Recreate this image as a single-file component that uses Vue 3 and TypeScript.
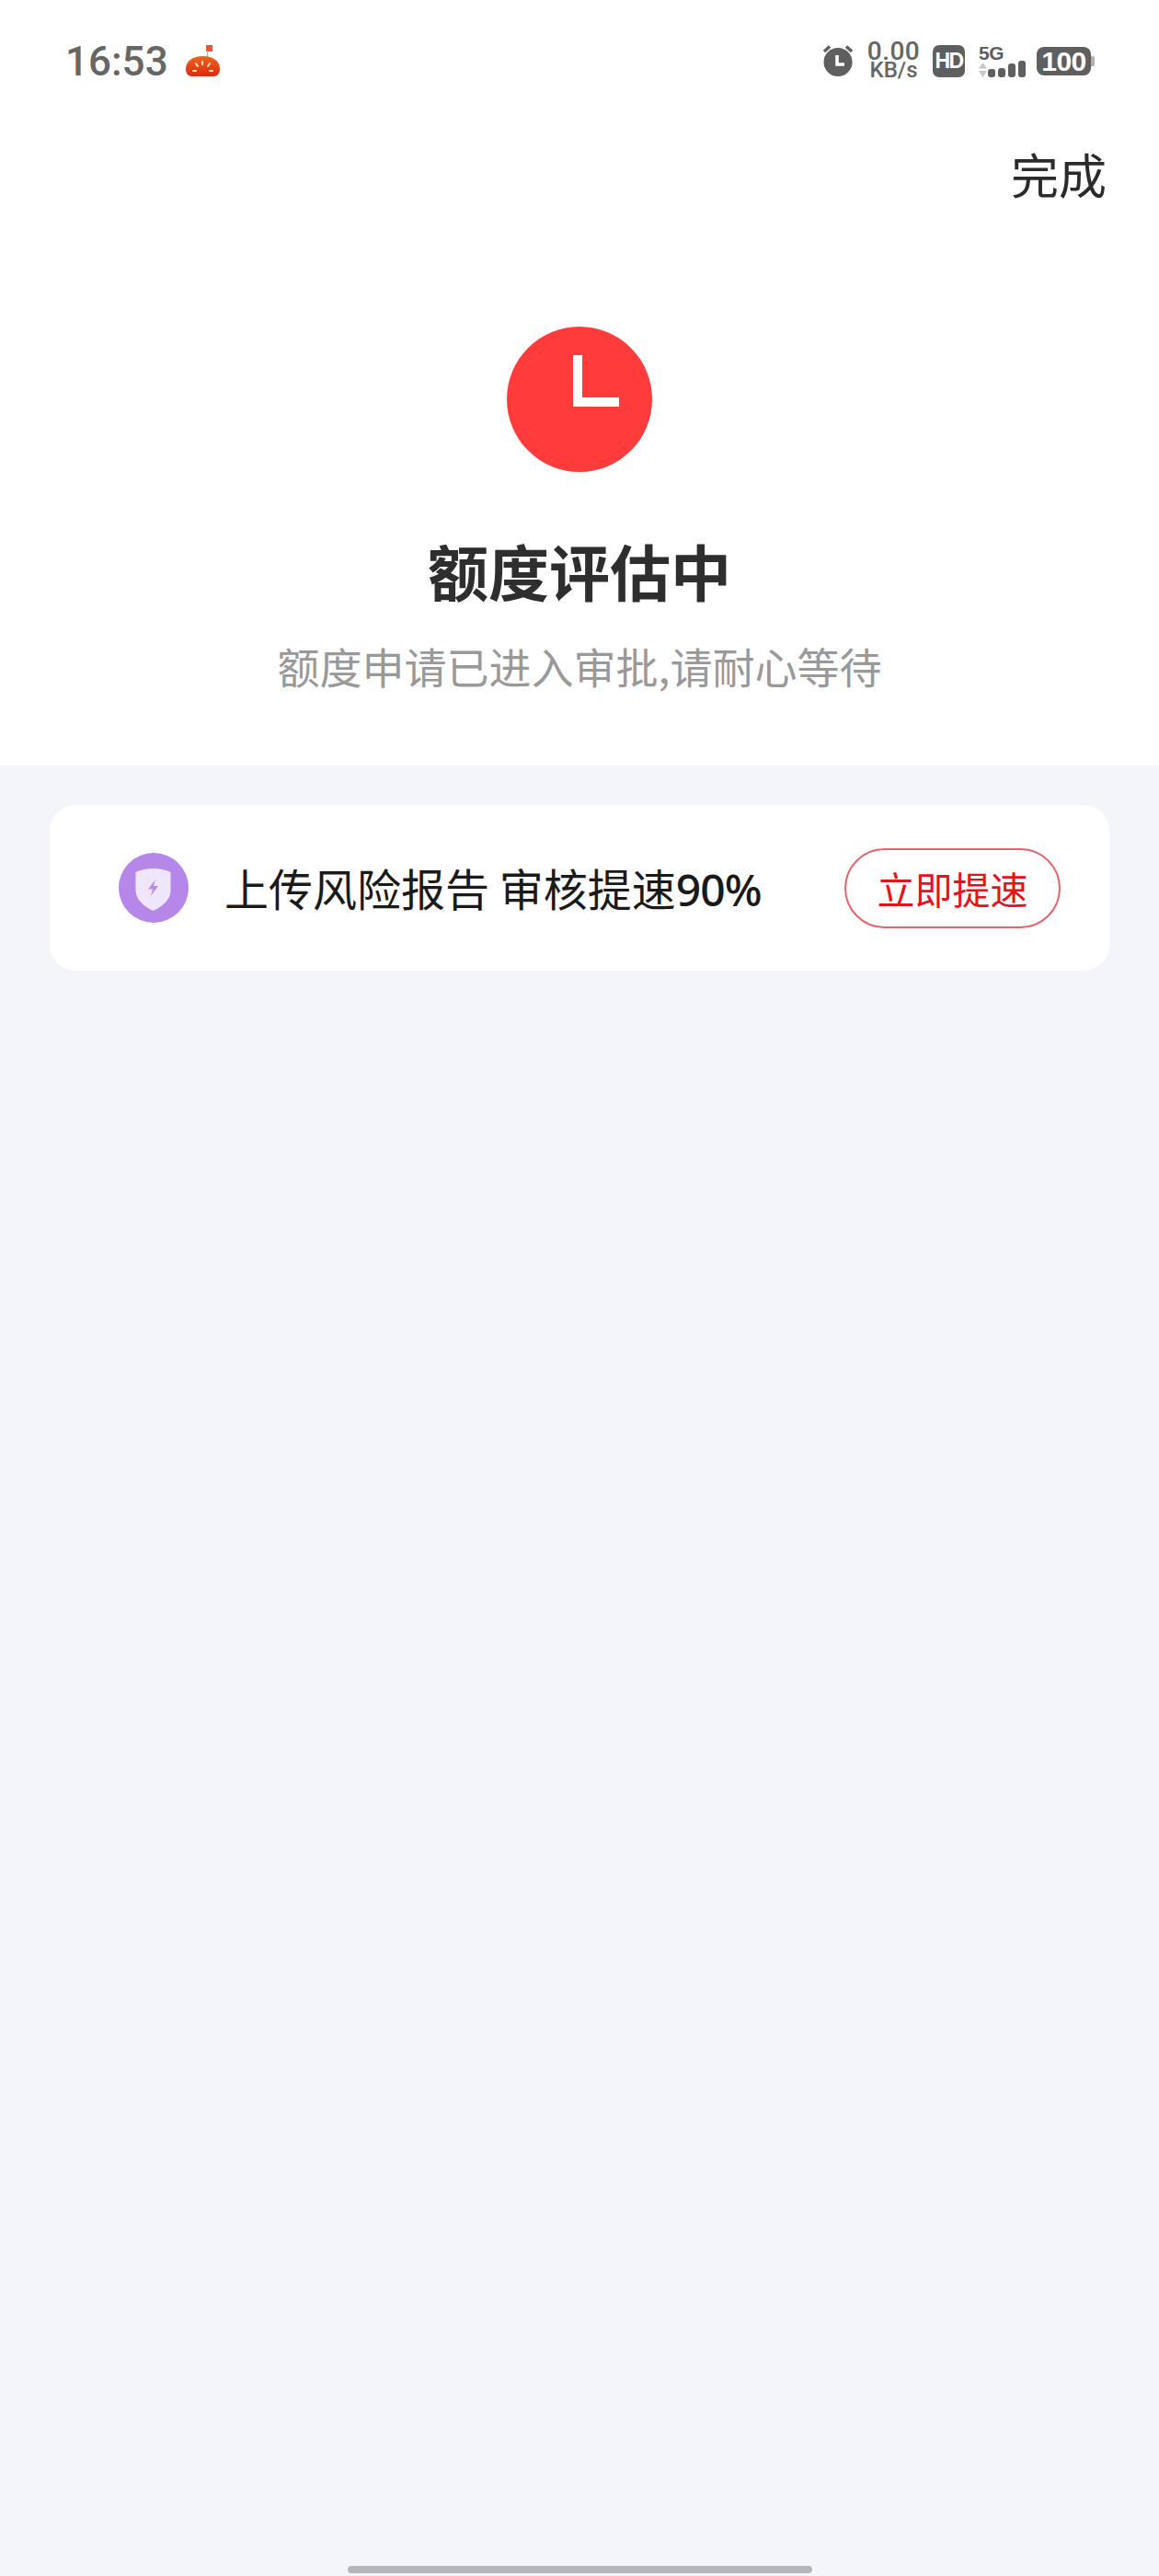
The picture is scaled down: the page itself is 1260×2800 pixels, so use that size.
<script setup lang="ts">
const bars: number[] = [9, 10, 15, 18]
</script>

<template>
  <div class="page">
    <header class="top">
      <div class="status">
        <div class="status-left">
          <span class="time">16:53</span>
          <svg class="tomato" width="37" height="34" viewBox="0 0 37 34">
            <defs>
              <linearGradient id="tom" x1="0" y1="0" x2="0" y2="1">
                <stop offset="0" stop-color="#f0641e" />
                <stop offset="1" stop-color="#dc2a10" />
              </linearGradient>
            </defs>
            <rect x="22" y="0" width="7" height="7" fill="#e8553c" />
            <rect x="23" y="6" width="1.200" height="7" fill="#e9a090" />
            <path d="M0 26C0 17 8 12 18.500 12S37 17 37 26C37 31 34 34 30 34H7C3 34 0 31 0 26z" fill="url(#tom)" />
            <g stroke="#fde3c0" stroke-width="2" stroke-linecap="round">
              <path d="M18 18v3M11 20l2 3M26 20l-2 3M8 28h3M26 28h3" />
            </g>
          </svg>
        </div>
        <div class="status-right">
          <svg class="alarm" width="34" height="34" viewBox="0 0 34 34">
            <circle cx="17" cy="18.500" r="15.500" fill="#5f5f5f" />
            <path d="M2 7l6-5.500M32 7l-6-5.500" stroke="#5f5f5f" stroke-width="3.500" fill="none" />
            <path d="M16 11v10h8" stroke="#fff" stroke-width="3.500" fill="none" />
          </svg>
          <div class="speed">
            <span class="speed-num">0.00</span>
            <span class="speed-unit">KB/s</span>
          </div>
          <span class="hd">HD</span>
          <div class="signal">
            <span class="five-g">5G</span>
            <div class="signal-row">
              <svg width="9" height="16" viewBox="0 0 9 16">
                <path d="M4.500 0L9 6.500H0zM0 9h9l-4.500 7z" fill="#c8c8c8" />
              </svg>
              <div class="bars">
                <i v-for="(h, n) in bars" :key="n" class="bar" :style="{ height: h + 'px' }"></i>
              </div>
            </div>
          </div>
          <div class="battery">
            <span class="battery-body">100</span>
            <i class="battery-tip"></i>
          </div>
        </div>
      </div>

      <div class="nav">
        <span class="done">完成</span>
      </div>

      <div class="hero">
        <div class="clock"><i class="hand"></i></div>
        <h1 class="title">额度评估中</h1>
        <p class="sub">额度申请已进入审批,请耐心等待</p>
      </div>
    </header>

    <section class="card">
      <svg class="shield" width="76" height="76" viewBox="0 0 76 76">
        <circle cx="38" cy="38" r="38" fill="#b587e8" />
        <path d="M37.500 17c7 0 13 1.500 19 4v20c0 9-8 17-19 22-11-5-19-13-19-22V21c6-2.500 12-4 19-4z" fill="#efe6fb" />
        <path d="M40 29L32 39.500H37L35 47L43 36H38z" fill="#b98bea" />
      </svg>
      <span class="card-text">上传风险报告 审核提速<span class="num">90%</span></span>
      <button class="speedup" type="button">立即提速</button>
    </section>

    <div class="home"><i class="home-bar"></i></div>
  </div>
</template>

<style scoped>
.page {
  width: 1260px;
  height: 2800px;
  display: flex;
  flex-direction: column;
  background: #f4f5fa;
  font-family: "Noto Sans CJK SC", "Noto Sans", sans-serif;
}
.top {
  background: #fff;
  height: 832px;
  flex: none;
}
.status {
  height: 132px;
  padding: 0 70px 0 71px;
  display: flex;
  align-items: center;
  justify-content: space-between;
  box-sizing: border-box;
}
.status-left {
  display: flex;
  align-items: center;
  gap: 19px;
}
.time {
  padding-top: 2px;
  font-family: Roboto, sans-serif;
  font-weight: 500;
  font-size: 44px;
  line-height: 50px;
  color: #666;
}
.tomato {
  display: block;
}
.status-right {
  display: flex;
  align-items: center;
  color: #5f5f5f;
}
.alarm {
  display: block;
}
.speed {
  margin-left: 15px;
  width: 57px;
  display: flex;
  flex-direction: column;
  align-items: center;
  font-family: Roboto, sans-serif;
  color: #666;
}
.speed-num {
  font-size: 28px;
  line-height: 21px;
  font-weight: 500;
  letter-spacing: 0.5px;
}
.speed-unit {
  font-size: 24px;
  line-height: 21px;
  font-weight: 500;
}
.hd {
  margin-left: 14px;
  width: 35px;
  height: 35px;
  border-radius: 7px;
  background: #5f5f5f;
  color: #fff;
  font-family: "Liberation Sans", sans-serif;
  font-weight: 700;
  font-size: 23px;
  line-height: 35px;
  text-align: center;
  letter-spacing: -1.500px;
}
.signal {
  margin-left: 15px;
  width: 51px;
  display: flex;
  flex-direction: column;
}
.five-g {
  font-family: "Liberation Sans", sans-serif;
  font-weight: 700;
  font-size: 21px;
  line-height: 17px;
  letter-spacing: -0.500px;
  color: #5f5f5f;
}
.signal-row {
  display: flex;
  align-items: flex-end;
  justify-content: space-between;
}
.bars {
  display: flex;
  align-items: flex-end;
  gap: 3px;
}
.bar {
  width: 8px;
  background: #5f5f5f;
  border-radius: 3px;
}
.battery {
  margin-left: 12px;
  display: flex;
  align-items: center;
}
.battery-body {
  width: 59px;
  height: 31px;
  border-radius: 8px;
  background: #5f5f5f;
  color: #fff;
  font-family: "Liberation Sans", sans-serif;
  font-weight: 700;
  font-size: 30px;
  line-height: 31px;
  text-align: center;
  letter-spacing: -0.500px;
}
.battery-tip {
  width: 4px;
  height: 11px;
  background: #b0b0b0;
  border-radius: 0 2px 2px 0;
}
.nav {
  height: 114px;
  padding-right: 57px;
  padding-bottom: 2px;
  display: flex;
  align-items: center;
  justify-content: flex-end;
}
.done {
  font-size: 52px;
  line-height: 60px;
  color: #2b2b2b;
}
.hero {
  padding-top: 107px;
  display: flex;
  flex-direction: column;
  align-items: center;
}
.clock {
  position: relative;
  width: 158px;
  height: 158px;
  border-radius: 50%;
  background: #ff3b3b;
}
.hand {
  position: absolute;
  left: 72px;
  top: 31px;
  width: 50px;
  height: 56px;
  box-sizing: border-box;
  border-left: 10px solid #fff;
  border-bottom: 10px solid #fff;
}
.title {
  margin: 66px 0 0;
  font-size: 66px;
  line-height: 80px;
  font-weight: 700;
  color: #2e2e2e;
}
.sub {
  margin: 34px 0 0;
  font-size: 46px;
  line-height: 60px;
  color: #999;
}
.card {
  margin: 43px 54px 0;
  height: 180px;
  flex: none;
  box-sizing: border-box;
  padding: 0 53px 0 75px;
  background: #fff;
  border-radius: 28px;
  display: flex;
  align-items: center;
}
.shield {
  flex: none;
  display: block;
}
.card-text {
  margin-left: 39px;
  font-size: 48px;
  line-height: 60px;
  color: #1a1a1a;
  white-space: nowrap;
}
.num {
  font-family: "Noto Sans", sans-serif;
  font-weight: 500;
  letter-spacing: -1px;
}
.speedup {
  margin-left: auto;
  width: 235px;
  height: 87px;
  box-sizing: border-box;
  padding: 0;
  border: 2px solid #e4646c;
  border-radius: 44px;
  background: #fff;
  color: #e8101c;
  font-family: inherit;
  font-size: 41px;
  line-height: 1;
}
.home {
  margin-top: auto;
  padding-bottom: 3px;
  display: flex;
  justify-content: center;
}
.home-bar {
  width: 505px;
  height: 8px;
  border-radius: 4px;
  background: #b5b6bb;
}
</style>
